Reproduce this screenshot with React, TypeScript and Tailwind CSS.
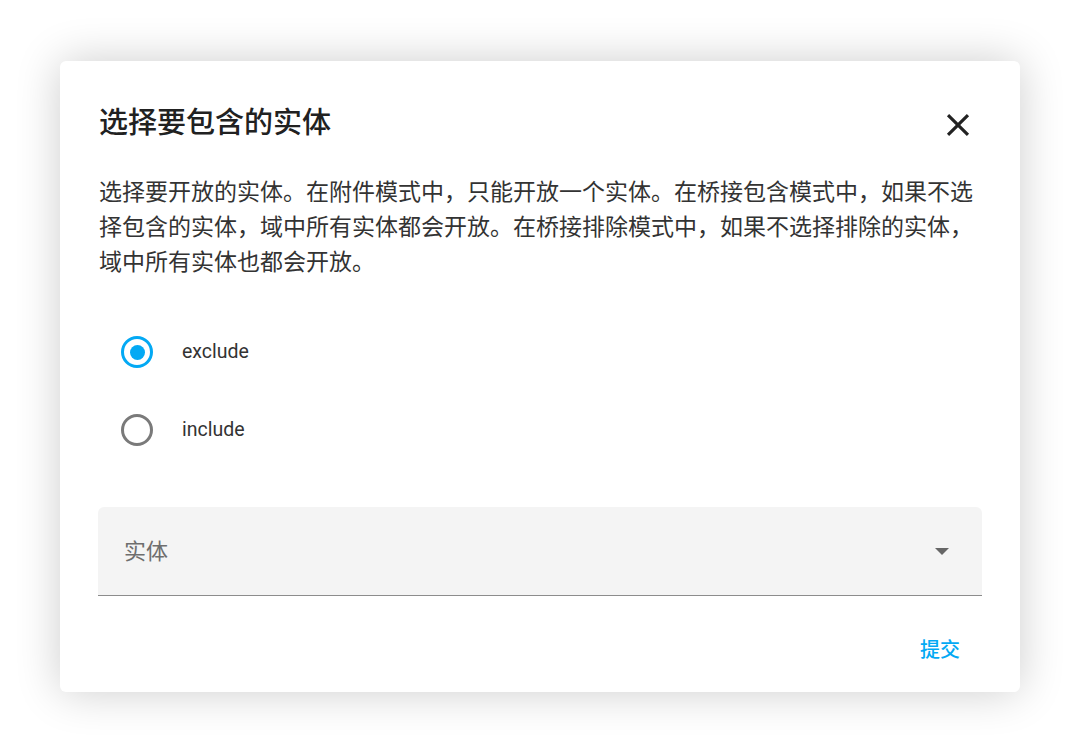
import { useState } from "react";

const font = { fontFamily: "Roboto, 'Noto Sans CJK SC', sans-serif" };

const options = ["exclude", "include"];

const Radio = ({ checked, label, onClick }: { checked: boolean; label: string; onClick: () => void }) => {
  return (
    <button onClick={onClick} className="flex items-center h-[78px] w-full text-left">
      <span className="w-[78px] flex justify-center pl-[2px]">
        <span
          className={
            checked
              ? "size-[32px] rounded-full border-[3px] border-[#03a9f4] flex items-center justify-center"
              : "size-[32px] rounded-full border-[3px] border-[#7a7a7a] flex items-center justify-center"
          }
        >
          {checked && <span className="size-[15px] rounded-full bg-[#03a9f4]" />}
        </span>
      </span>
      <span className="ml-[7px] text-[19.5px] text-[#333]">{label}</span>
    </button>
  );
};

export default function App() {
  const [mode, setMode] = useState("exclude");

  return (
    <div className="min-h-[754px] bg-white pt-[61px] pl-[60px]" style={font}>
      <div className="w-[960px] h-[631px] bg-white rounded-[6px] shadow-[0_0_45px_rgba(0,0,0,0.2)] px-[38px] pt-[44px] flex flex-col">
        <div className="flex items-start justify-between">
          <h1 className="text-[29px] leading-[36px] font-medium text-[#212121] ml-[1px]">选择要包含的实体</h1>
          <svg viewBox="0 0 24 24" className="size-[38px] mt-[1px] mr-[5px] text-[#222]" fill="currentColor">
            <path d="M19 6.41L17.59 5 12 10.59 6.41 5 5 6.41 10.59 12 5 17.59 6.41 19 12 13.41 17.59 19 19 17.59 13.41 12z" />
          </svg>
        </div>

        <p className="mt-[31px] text-[23px] leading-[35px] text-[#333] ml-[1px]">
          选择要开放的实体。在附件模式中，只能开放一个实体。在桥接包含模式中，如果不选择包含的实体，域中所有实体都会开放。在桥接排除模式中，如果不选择排除的实体，域中所有实体也都会开放。
        </p>

        <div className="mt-[33px] -ml-[1px]">
          {options.map((o) => (
            <Radio key={o} label={o} checked={mode === o} onClick={() => setMode(o)} />
          ))}
        </div>

        <div className="mt-[38px] h-[89px] bg-[#f4f4f4] rounded-t-[6px] border-b-[1.5px] border-[#8c8c8c] flex items-center justify-between pl-[26px] pr-[33px]">
          <span className="text-[22px] text-[#6e6e6e]">实体</span>
          <svg viewBox="0 0 14 7" className="w-[14px] h-[7px]">
            <path d="M0 0h14L7 7z" fill="#666" />
          </svg>
        </div>

        <div className="flex justify-end mt-[39px] pr-[22px]">
          <button className="text-[20px] text-[#03a9f4] font-medium">提交</button>
        </div>
      </div>
    </div>
  );
}
